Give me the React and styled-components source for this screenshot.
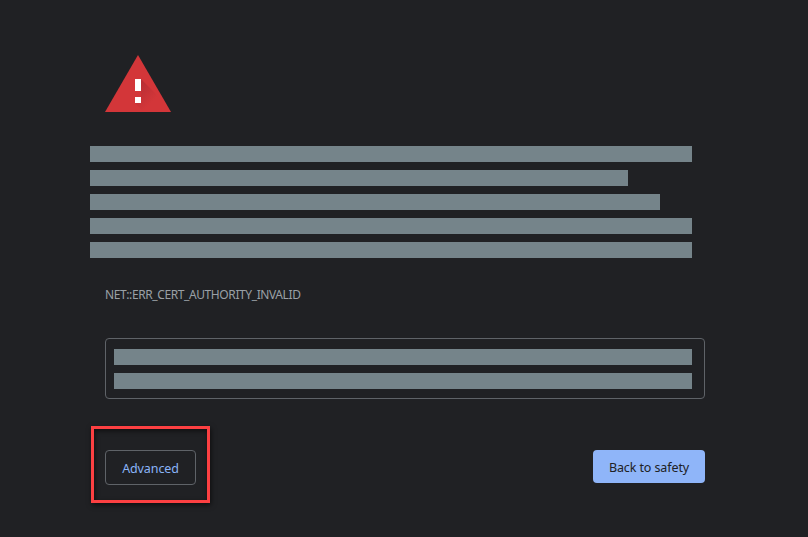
import React from "react";
import styled, { createGlobalStyle } from "styled-components";

const GlobalStyle = createGlobalStyle`
  * { box-sizing: border-box; }
  body { margin: 0; background: #202124; }
`;

const Page = styled.main`
  width: 808px;
  height: 537px;
  padding: 55px 103px 0 105px;
  overflow: hidden;
  background: #202124;
  font-family: "Noto Sans", "Open Sans", sans-serif;
`;

const WarningIcon = styled.svg`
  display: block;
  width: 66px;
  height: 57px;
`;

const Lines = styled.div`
  display: flex;
  flex-direction: column;
  gap: 8px;
`;

const Message = styled(Lines)`
  margin: 34px 0 0 -15px;
`;

const Line = styled.div`
  width: ${({ $width }) => $width}px;
  height: 16px;
  background: #75848a;
`;

const ErrorCode = styled.div`
  margin-top: 28px;
  height: 18px;
  color: #9aa0a6;
  font-size: 12px;
  line-height: 18px;
  letter-spacing: -0.4px;
  white-space: nowrap;
`;

const Notice = styled.section`
  width: 600px;
  height: 61px;
  margin-top: 34px;
  padding: 10px 8px;
  border: 1px solid #5f6368;
  border-radius: 4px;
`;

const Actions = styled.footer`
  display: flex;
  justify-content: space-between;
  align-items: flex-start;
  width: 614px;
  height: 77px;
  margin: 27px 0 0 -14px;
`;

const Highlight = styled.div`
  display: flex;
  width: 119px;
  height: 77px;
  padding: 21px 11px;
  border: 3px solid #fc4042;
  box-shadow: 1px 2px 5px rgba(0, 0, 0, 0.6), inset 1px 2px 5px rgba(0, 0, 0, 0.55);
`;

const Button = styled.button`
  display: flex;
  align-items: center;
  justify-content: center;
  width: ${({ $primary }) => ($primary ? 112 : 91)}px;
  height: ${({ $primary }) => ($primary ? 33 : 35)}px;
  margin-top: ${({ $primary }) => ($primary ? 24 : 0)}px;
  padding: 2px 0 0;
  border: ${({ $primary }) => ($primary ? "0" : "1px solid #5f6368")};
  border-radius: 4px;
  background: ${({ $primary }) => ($primary ? "#8fb5f9" : "transparent")};
  color: ${({ $primary }) => ($primary ? "#202124" : "#8ab4f8")};
  font: 12.5px/18px "Noto Sans", "Open Sans", sans-serif;
  letter-spacing: -0.1px;
  white-space: nowrap;
`;

const messageWidths = [602, 538, 570, 602, 602];

export default function App() {
  return (
    <>
      <GlobalStyle />
      <Page>
        <WarningIcon viewBox="0 0 66 57" aria-label="Warning">
          <defs>
            <linearGradient id="shade" gradientUnits="userSpaceOnUse" x1="33" y1="27" x2="50" y2="44">
              <stop offset="0" stopColor="#b52d34" />
              <stop offset="1" stopColor="#d33639" />
            </linearGradient>
          </defs>
          <path d="M33 0 66 57H0Z" fill="#d33639" />
          <path d="M36 24 50.5 38.5 61.2 57H39L30 48 36 42Z" fill="url(#shade)" />
          <path d="M30 24h6v12h-6zM30 42h6v6h-6z" fill="#fff" />
        </WarningIcon>
        <Message>
          {messageWidths.map((width, index) => <Line key={index} $width={width} />)}
        </Message>
        <ErrorCode>NET::ERR_CERT_AUTHORITY_INVALID</ErrorCode>
        <Notice>
          <Lines>
            <Line $width={578} />
            <Line $width={578} />
          </Lines>
        </Notice>
        <Actions>
          <Highlight><Button>Advanced</Button></Highlight>
          <Button $primary>Back to safety</Button>
        </Actions>
      </Page>
    </>
  );
}
